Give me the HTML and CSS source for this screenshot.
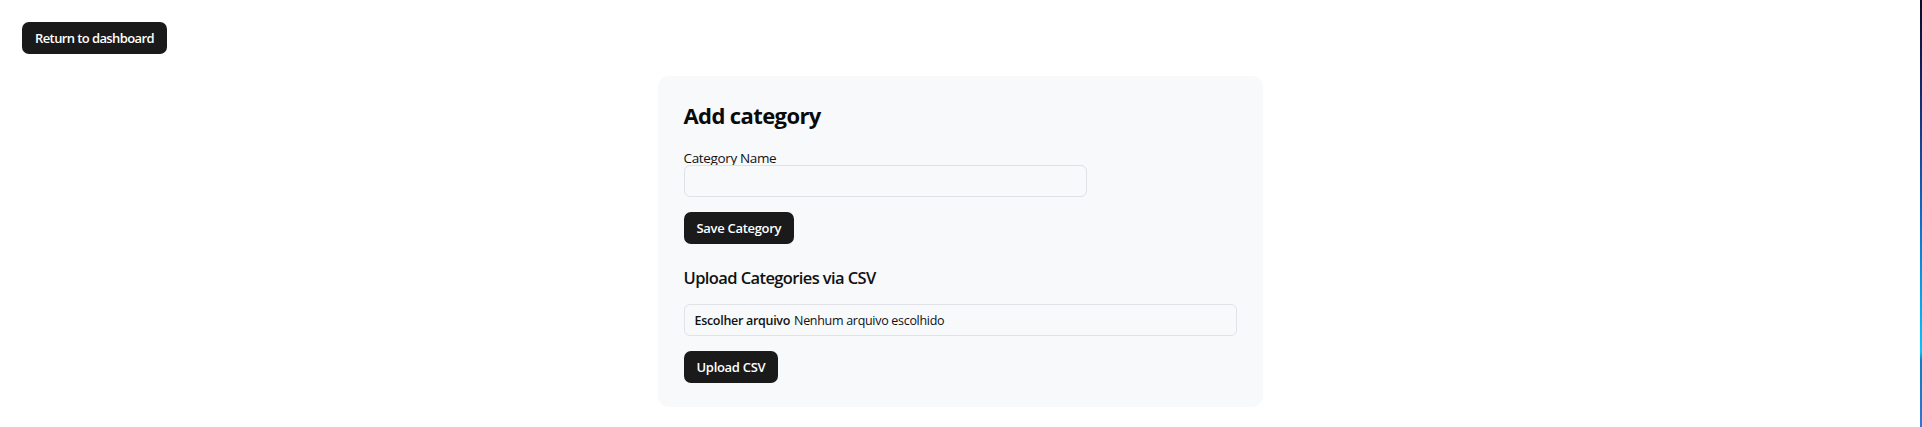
FILE: index.html
```html
<!DOCTYPE html>
<html lang="pt">
<head>
<meta charset="utf-8">
<title>Add category</title>
<link rel="stylesheet" href="styles.css">
</head>
<body>
  <main class="page">
    <button class="btn back-btn" type="button">Return to dashboard</button>
    <section class="card">
      <h2 class="card-title">Add category</h2>
      <form class="form">
        <label class="field-label" for="cat-name">Category Name</label>
        <input class="text-input" id="cat-name" type="text">
        <button class="btn save-btn" type="button">Save Category</button>
      </form>
      <h3 class="section-title">Upload Categories via CSV</h3>
      <form class="form">
        <label class="file-input">
          <input class="file-native" type="file" accept=".csv">
          <span class="file-btn">Escolher arquivo</span>
          <span class="file-name">Nenhum arquivo escolhido</span>
        </label>
        <button class="btn upload-btn" type="button">Upload CSV</button>
      </form>
    </section>
  </main>
  <div class="edge-stripe"></div>
</body>
</html>
```

FILE: styles.css
```css
* {
  box-sizing: border-box;
}

html, body {
  margin: 0;
  padding: 0;
}

body {
  display: flex;
  min-height: 100vh;
  background: #ffffff;
  color: #0b0b0b;
  font-family: "Open Sans", "Noto Sans", Arial, sans-serif;
}

.page {
  flex: 1;
  padding: 22px;
  display: flex;
  flex-direction: column;
  align-items: flex-start;
}

.edge-stripe {
  width: 2px;
  flex: none;
  background: linear-gradient(180deg,
    #0b0c26 0%,
    #0f1c55 14%,
    #153f92 32%,
    #0b6fce 52%,
    #049fee 68%,
    #00c6ff 82%,
    #0b7fc4 84%,
    #1e78cc 92%,
    #3a72d6 100%);
}

.btn {
  display: flex;
  align-items: center;
  justify-content: center;
  height: 32px;
  padding: 0 13px;
  border: none;
  border-radius: 7px;
  background: #1a1a1a;
  color: #ffffff;
  font-family: inherit;
  font-size: 13px;
  font-weight: 600;
  letter-spacing: -0.3px;
  white-space: nowrap;
  cursor: pointer;
}

.back-btn {
  letter-spacing: -0.6px;
}

.card {
  align-self: center;
  width: 605px;
  margin-top: 22px;
  padding: 26px 26px 24px;
  background: #f8f9fb;
  border-radius: 11px;
}

.card-title {
  margin: 0 0 23px;
  font-size: 22px;
  line-height: 1.2;
  font-weight: 700;
  letter-spacing: -0.6px;
  color: #0a0a0a;
}

.form {
  display: flex;
  flex-direction: column;
  align-items: flex-start;
}

.field-label {
  display: block;
  font-size: 13.5px;
  line-height: 14px;
  letter-spacing: -0.35px;
  color: #111111;
}

.text-input {
  width: 403px;
  height: 32px;
  margin: 0;
  padding: 0 10px;
  border: 1px solid #dfe1e6;
  border-radius: 6px;
  background: #f8f9fb;
  font-family: inherit;
  font-size: 13px;
}

.save-btn {
  margin-top: 15px;
}

.section-title {
  margin: 24px 0 16px;
  font-size: 16.5px;
  line-height: 20px;
  font-weight: 600;
  letter-spacing: -0.6px;
  color: #111111;
}

.file-input {
  display: flex;
  align-items: center;
  gap: 4px;
  width: 100%;
  height: 32px;
  padding: 0 10px;
  border: 1px solid #e1e3e8;
  border-radius: 6px;
  background: #f8f9fb;
  font-size: 12.5px;
  letter-spacing: -0.3px;
  color: #111111;
  cursor: pointer;
}

.file-native {
  display: none;
}

.file-btn {
  font-weight: 600;
}

.file-name {
  font-weight: 400;
}

.upload-btn {
  margin-top: 15px;
}
```
